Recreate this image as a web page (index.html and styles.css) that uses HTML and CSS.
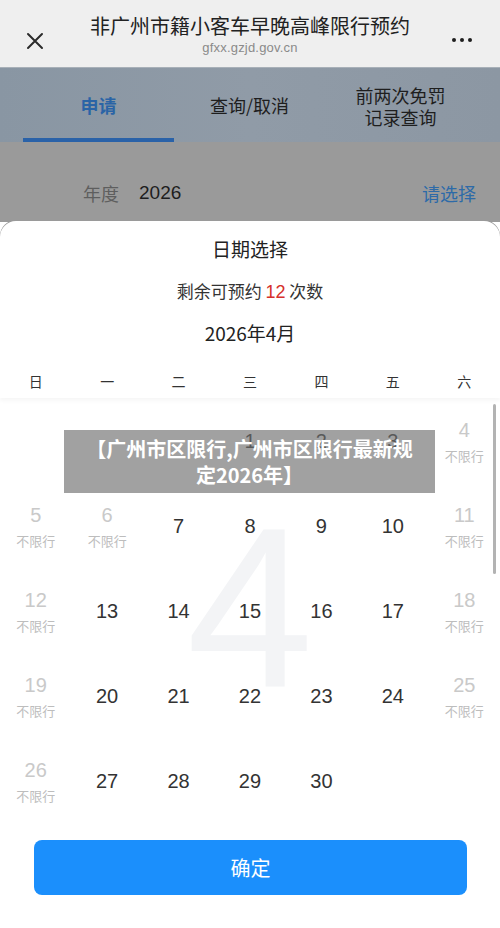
FILE: index.html
```html
<!DOCTYPE html>
<html lang="zh-CN">
<head>
<meta charset="utf-8">
<title>非广州市籍小客车早晚高峰限行预约</title>
<link rel="stylesheet" href="styles.css">
</head>
<body>
<div class="app">
  <header class="topbar">
    <div class="tb-left">
      <svg width="18" height="18" viewBox="0 0 18 18"><path d="M2 2 L16 16 M16 2 L2 16" stroke="#2b2b2b" stroke-width="2" stroke-linecap="round" fill="none"/></svg>
    </div>
    <div class="tb-center">
      <div class="tb-title">非广州市籍小客车早晚高峰限行预约</div>
      <div class="tb-sub">gfxx.gzjd.gov.cn</div>
    </div>
    <div class="tb-right">
      <span class="dot"></span><span class="dot"></span><span class="dot"></span>
    </div>
  </header>

  <nav class="tabs">
    <div class="tab active">申请</div>
    <div class="tab">查询/取消</div>
    <div class="tab two">前两次免罚<br>记录查询</div>
  </nav>

  <section class="yearrow">
    <span class="y-label">年度</span>
    <span class="y-value">2026</span>
    <span class="y-pick">请选择</span>
  </section>

  <section class="modal">
    <div class="m-title">日期选择</div>
    <div class="m-remain">剩余可预约 <span class="red">12</span> 次数</div>
    <div class="m-month">2026年4月</div>
    <div class="weekdays">
      <span>日</span><span>一</span><span>二</span><span>三</span><span>四</span><span>五</span><span>六</span>
    </div>
    <div class="scroll">
      <div class="watermark" aria-hidden="true"></div>
      <div class="grid">
        <div class="cell"></div><div class="cell"></div><div class="cell"></div>
        <div class="cell"><span class="num">1</span></div>
        <div class="cell"><span class="num">2</span></div>
        <div class="cell"><span class="num">3</span></div>
        <div class="cell free"><span class="num">4</span><span class="lbl">不限行</span></div>

        <div class="cell free"><span class="num">5</span><span class="lbl">不限行</span></div>
        <div class="cell free"><span class="num">6</span><span class="lbl">不限行</span></div>
        <div class="cell"><span class="num">7</span></div>
        <div class="cell"><span class="num">8</span></div>
        <div class="cell"><span class="num">9</span></div>
        <div class="cell"><span class="num">10</span></div>
        <div class="cell free"><span class="num">11</span><span class="lbl">不限行</span></div>

        <div class="cell free"><span class="num">12</span><span class="lbl">不限行</span></div>
        <div class="cell"><span class="num">13</span></div>
        <div class="cell"><span class="num">14</span></div>
        <div class="cell"><span class="num">15</span></div>
        <div class="cell"><span class="num">16</span></div>
        <div class="cell"><span class="num">17</span></div>
        <div class="cell free"><span class="num">18</span><span class="lbl">不限行</span></div>

        <div class="cell free"><span class="num">19</span><span class="lbl">不限行</span></div>
        <div class="cell"><span class="num">20</span></div>
        <div class="cell"><span class="num">21</span></div>
        <div class="cell"><span class="num">22</span></div>
        <div class="cell"><span class="num">23</span></div>
        <div class="cell"><span class="num">24</span></div>
        <div class="cell free"><span class="num">25</span><span class="lbl">不限行</span></div>

        <div class="cell free"><span class="num">26</span><span class="lbl">不限行</span></div>
        <div class="cell"><span class="num">27</span></div>
        <div class="cell"><span class="num">28</span></div>
        <div class="cell"><span class="num">29</span></div>
        <div class="cell"><span class="num">30</span></div>
        <div class="cell"></div><div class="cell"></div>
      </div>
      <div class="scrollbar"></div>
      <div class="caption">【广州市区限行,广州市区限行最新规<br>定2026年】</div>
    </div>
    <div class="btn-wrap">
      <div class="btn">确定</div>
    </div>
  </section>
</div>
</body>
</html>
```

FILE: styles.css
```css
* { box-sizing: border-box; }
html, body { margin: 0; padding: 0; }
body {
  width: 500px;
  height: 928px;
  overflow: hidden;
  font-family: "Noto Sans CJK SC", "Noto Sans", sans-serif;
  color: #333;
  background: #fff;
}
.app {
  height: 928px;
  display: flex;
  flex-direction: column;
}
.topbar {
  height: 67px;
  flex: none;
  background: #efefef;
  display: grid;
  grid-template-columns: 70px 1fr 70px;
  align-items: center;
}
.tb-left {
  display: flex;
  justify-content: center;
  padding-top: 14px;
}
.tb-center {
  text-align: center;
  padding-top: 2px;
}
.tb-title {
  font-size: 20px;
  line-height: 26px;
  color: #222;
}
.tb-sub {
  font-family: "Liberation Sans", "Noto Sans", sans-serif;
  font-size: 13px;
  line-height: 16px;
  color: #8a8a8a;
  margin-top: 1px;
  letter-spacing: 0.2px;
}
.tb-right {
  display: flex;
  justify-content: center;
  gap: 4px;
  padding-top: 12px;
  padding-right: 6px;
}
.dot {
  width: 4px;
  height: 4px;
  border-radius: 50%;
  background: #1e1e1e;
}
.tabs {
  height: 75px;
  flex: none;
  display: grid;
  grid-template-columns: repeat(3, 1fr);
  padding: 0 24px 0 23px;
  background: linear-gradient(90deg, #8996a3 0%, #909ba7 50%, #8c97a3 100%);
  border-top: 1px solid #a8b0b8;
}
.tab {
  display: flex;
  align-items: center;
  justify-content: center;
  font-size: 18px;
  line-height: 22px;
  color: #1e1e1e;
  text-align: center;
}
.tab.active {
  color: #2a64a6;
  font-weight: bold;
  border-bottom: 4px solid #2a62a8;
  padding-top: 3px;
}
.tab.two { padding-top: 2px; }
.yearrow {
  height: 80px;
  flex: none;
  background: #9a9a9a;
  display: flex;
  align-items: center;
  padding: 22px 24px 0 83px;
  font-size: 18px;
}
.y-label { color: #5e5e5e; }
.y-value {
  color: #1e1e1e;
  margin-left: 20px;
  font-family: "Liberation Sans", "Noto Sans", sans-serif;
  font-size: 19px;
}
.y-pick {
  color: #2d6aa8;
  margin-left: auto;
}
.modal {
  flex: 1;
  background: #fff;
  border-radius: 16px 16px 0 0;
  margin-top: -1px;
  display: flex;
  flex-direction: column;
  box-shadow: 0 -1px 0 #9a9a9a;
}
.m-title {
  margin-top: 14px;
  line-height: 28px;
  font-size: 19px;
  text-align: center;
  color: #222;
}
.m-remain {
  margin-top: 14px;
  line-height: 28px;
  font-size: 17px;
  text-align: center;
  color: #333;
}
.red { color: #d6302b; font-family: "Liberation Sans", sans-serif; font-size: 18px; }
.m-month {
  margin-top: 13px;
  line-height: 28px;
  font-size: 19px;
  text-align: center;
  color: #222;
}
.weekdays {
  margin-top: 20px;
  height: 31px;
  display: grid;
  grid-template-columns: repeat(7, 1fr);
  font-size: 14px;
  line-height: 28px;
  text-align: center;
  color: #333;
  box-shadow: 0 3px 4px rgba(0,0,0,0.035);
  position: relative;
  z-index: 2;
}
.scroll {
  position: relative;
  height: 425px;
  flex: none;
  overflow: hidden;
}
.watermark {
  position: absolute;
  left: 0;
  right: 0;
  top: 60px;
  text-align: center;
  font-family: "Liberation Sans", sans-serif;
  font-size: 228px;
  line-height: 300px;
  color: #f3f4f6;
  z-index: 0;
}
.watermark::before { content: "4"; }
.grid {
  position: relative;
  z-index: 1;
  display: grid;
  grid-template-columns: repeat(7, 1fr);
  grid-auto-rows: 85px;
}
.cell {
  display: flex;
  flex-direction: column;
  align-items: center;
  justify-content: center;
}
.num {
  font-family: "Liberation Sans", "Noto Sans", sans-serif;
  font-size: 20px;
  line-height: 26px;
  color: #333;
}
.cell.free .num {
  color: #c9c9c9;
  margin-top: 4px;
}
.lbl {
  font-size: 13px;
  line-height: 26px;
  color: #bdbdbd;
}
.scrollbar {
  position: absolute;
  right: 4px;
  top: 6px;
  width: 3px;
  height: 170px;
  border-radius: 2px;
  background: #b3b3b3;
  z-index: 3;
}
.caption {
  position: absolute;
  left: 64px;
  top: 32px;
  width: 371px;
  height: 63px;
  background: rgba(110, 110, 110, 0.65);
  color: #fff;
  font-weight: bold;
  font-size: 20px;
  line-height: 26px;
  text-align: center;
  padding-top: 6px;
  z-index: 4;
}
.btn-wrap {
  padding: 17px 33px 0 34px;
}
.btn {
  height: 55px;
  border-radius: 8px;
  background: #1b8ffc;
  color: #fff;
  font-size: 20px;
  display: flex;
  align-items: center;
  justify-content: center;
}
```
